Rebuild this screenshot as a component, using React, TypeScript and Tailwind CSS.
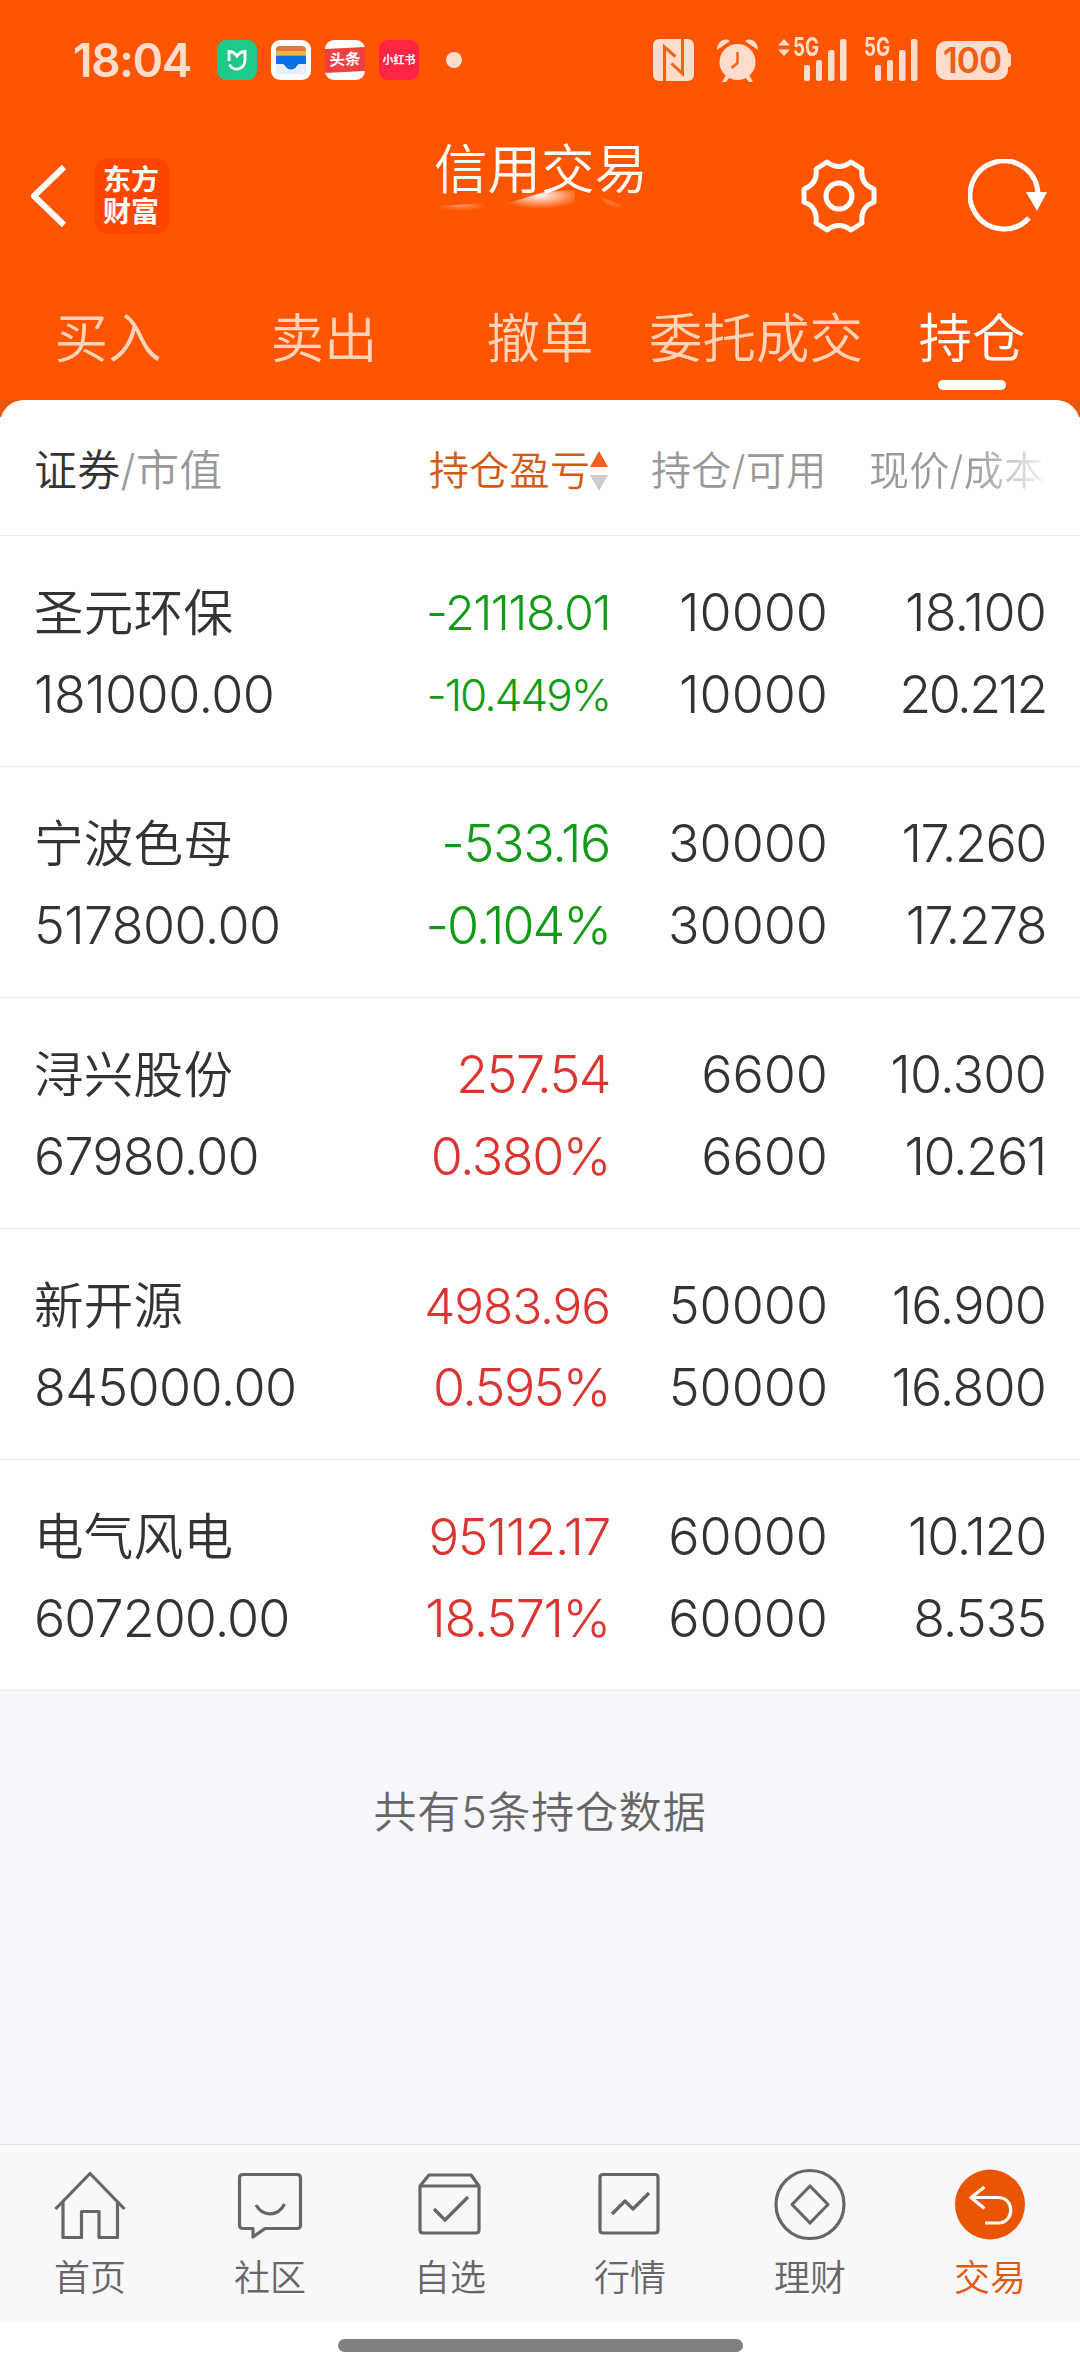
import { ReactNode } from 'react'

interface Position {
    name: string
    value: string
    profit: string
    rate: string
    held: string
    usable: string
    price: string
    cost: string
    down?: boolean
    profitClass?: string
    rateClass?: string
}

const positions: Position[] = [
    { name: '圣元环保', value: '181000.00', profit: '-21118.01', rate: '-10.449%', held: '10000', usable: '10000', price: '18.100', cost: '20.212', down: true, profitClass: 'text-[48.5px]', rateClass: 'text-[44px]' },
    { name: '宁波色母', value: '517800.00', profit: '-533.16', rate: '-0.104%', held: '30000', usable: '30000', price: '17.260', cost: '17.278', down: true },
    { name: '浔兴股份', value: '67980.00', profit: '257.54', rate: '0.380%', held: '6600', usable: '6600', price: '10.300', cost: '10.261' },
    { name: '新开源', value: '845000.00', profit: '4983.96', rate: '0.595%', held: '50000', usable: '50000', price: '16.900', cost: '16.800', profitClass: 'text-[49.5px]' },
    { name: '电气风电', value: '607200.00', profit: '95112.17', rate: '18.571%', held: '60000', usable: '60000', price: '10.120', cost: '8.535', profitClass: 'text-[51px]' },
]

const tabs = ['买入', '卖出', '撤单', '委托成交', '持仓']

// px to take back for the glyphs that Inter sets wide
const glyphTrim: Record<string, number> = { '.': 4.5, '-': 5, '%': 4, '2': 3.5, '4': 0.5, '7': 0.5, '8': 0.5, '9': 1 }

function Num({ children, className = '' }: { children: string; className?: string }) {
    const trim = children.split('').reduce((sum, c) => sum + (glyphTrim[c] ?? 0), 0)

    return (
        <span className={className} style={{ letterSpacing: `${(-trim / children.length).toFixed(2)}px` }}>
            {children}
        </span>
    )
}

function Signal() {
    return (
        <svg width="43" height="42" viewBox="0 0 43 42" fill="currentColor">
            <rect x="0" y="26" width="6" height="16" rx="2" />
            <rect x="12" y="21" width="6" height="21" rx="2" />
            <rect x="24" y="11" width="6.5" height="31" rx="2" />
            <rect x="36" y="0" width="6.5" height="42" rx="2" />
        </svg>
    )
}

function StatusBar() {
    return (
        <div className="flex h-[120px] items-center pl-[73px] text-[#ffdccb]">
            <span className="w-[117px] text-[46px] font-semibold leading-none tracking-[-1.3px]">18:04</span>
            <div className="ml-[27px] flex gap-[14px]">
                <svg width="40" height="40" viewBox="0 0 40 40">
                    <rect width="40" height="40" rx="9" fill="#1fc98b" />
                    <path d="M12 21V11.500q5 0 8 4.500q3-4.500 8-4.500V20" fill="none" stroke="#fff" strokeWidth="2.800" />
                    <path d="M12.500 24.500c3 7 15.500 6.500 15.500-5.500" fill="none" stroke="#fff" strokeWidth="2.800" />
                </svg>
                <svg width="40" height="40" viewBox="0 0 40 40">
                    <rect width="40" height="40" rx="9" fill="#fbfafa" />
                    <path d="M5 12V10q0-4 4-4h22q4 0 4 4v2z" fill="#e4763a" />
                    <rect x="5" y="11" width="30" height="4.500" fill="#f5b23c" />
                    <path d="M5 15.500h30V24h-6q-2 0-3 2c-3 5-9 5-12 0q-1-2-3-2H5z" fill="#0a70e8" />
                    <path d="M5 24h6q2 0 3 2c3 5 9 5 12 0q1-2 3-2h6v7q0 3-3 3H8q-3 0-3-3z" fill="#e6effc" />
                </svg>
                <div className="flex h-10 w-10 items-center overflow-hidden rounded-[9px] bg-white">
                    <div className="flex h-[24px] w-10 -skew-y-3 items-center justify-center bg-[#f04142] text-[15.5px] font-bold leading-none text-white">头条</div>
                </div>
                <div className="flex h-10 w-10 items-center justify-center rounded-[9px] bg-[#ff2543] text-[11px] font-bold leading-none text-white">小红书</div>
            </div>
            <span className="ml-[27px] h-4 w-4 rounded-full bg-[#ffdccb]" />
            <svg className="ml-[191px]" width="41" height="42" viewBox="0 0 41 42">
                <rect width="41" height="42" rx="6" fill="#ffdccb" />
                <path d="M11.500 42V8l11 9.500M29.500 0v34.500l-11-10" fill="none" stroke="#f2611a" strokeWidth="3" />
            </svg>
            <svg className="ml-[23px]" width="41" height="43" viewBox="0 0 41 43">
                <path d="M0 11C0 3 7 -2 13 2zM41 11C41 3 34 -2 28 2zM9 36l-4 7h4l4-5zM32 36l4 7h-4l-4-5z" fill="#ffdccb" />
                <circle cx="20.500" cy="23" r="18" fill="#ffdccb" />
                <path d="M20.500 13v11l-6 5" fill="none" stroke="#f2611a" strokeWidth="2.500" />
            </svg>
            <div className="relative ml-[46px]">
                <svg className="absolute -left-[26px] top-0" width="12" height="17" viewBox="0 0 12 17" fill="currentColor">
                    <path d="M6 0l6 6.500H0zM6 17l6-6.500H0z" />
                </svg>
                <span className="absolute -left-[11px] -top-px origin-left scale-x-75 text-[25px] font-bold leading-[18px]">5G</span>
                <Signal />
            </div>
            <div className="relative ml-[28px]">
                <span className="absolute -left-[11px] -top-px origin-left scale-x-75 text-[25px] font-bold leading-[18px]">5G</span>
                <Signal />
            </div>
            <div className="ml-[18px] flex items-center">
                <div className="flex h-[39px] w-[72px] items-center justify-center rounded-[10px] bg-[#ffdccb] text-[35px] font-semibold leading-none tracking-[-1px] text-[#ee5e18]">100</div>
                <div className="h-[14px] w-[3px] rounded-r bg-[#ffdccb]" />
            </div>
        </div>
    )
}

function TitleBar() {
    return (
        <div className="flex h-[150px] items-start text-white">
            <svg className="ml-[30px] mt-[44px]" width="38" height="64" viewBox="0 0 38 64" fill="none" stroke="currentColor" strokeWidth="6">
                <path d="M34 3L4 32l30 29" strokeLinejoin="round" />
            </svg>
            <div className="ml-[26px] mt-[38px] h-[76px] w-[76px] rounded-[14px] bg-[#ff4600] px-[9px] pt-[6px] text-[28px] font-bold leading-[32px] break-all">
                东方财富
            </div>
            <div className="relative ml-[263px] mt-[22px] w-[216px] whitespace-nowrap text-center text-[53.5px] font-[350] leading-[56px]">
                信用交易
                <svg className="absolute left-[6px] top-[45px]" width="200" height="26" viewBox="0 0 200 26">
                    <defs>
                        <radialGradient id="glow" cx="0.5" cy="0.25" r="0.6">
                            <stop offset="0" stopColor="#fff" stopOpacity=".95" />
                            <stop offset="1" stopColor="#fff" stopOpacity="0" />
                        </radialGradient>
                    </defs>
                    <path d="M66 17L105 5 136 3v22H66z" fill="url(#glow)" />
                    <path d="M0 19L44 16v9H0z" fill="url(#glow)" opacity=".4" />
                    <path d="M160 9l36 15q-26 0-36-15z" fill="url(#glow)" opacity=".35" />
                </svg>
            </div>
            <svg className="ml-[152px] mt-[39px]" width="76" height="74" viewBox="0 0 76 74" fill="none" stroke="currentColor" strokeWidth="5">
                <path d="M26 3Q38 12 50 3L61 10Q59 25 73 30V43Q59 48 61 64L50 71Q38 62 26 71L15 64Q17 48 3 43V30Q17 25 15 10Z" strokeLinejoin="round" />
                <circle cx="38" cy="37" r="13" />
            </svg>
            <svg className="ml-[91px] mt-[39px]" width="80" height="74" viewBox="0 0 80 74" fill="none" stroke="currentColor" strokeWidth="5">
                <path d="M61 59A34 34 0 1 1 70 36" />
                <path d="M58 33h21L69 52z" fill="currentColor" stroke="none" />
            </svg>
        </div>
    )
}

function Pair({ top, bottom, className = '' }: { top: ReactNode; bottom: ReactNode; className?: string }) {
    return (
        <div className={`flex flex-col whitespace-nowrap text-[52px] leading-[82px] ${className}`}>
            {top}
            {bottom}
        </div>
    )
}

function PositionRow({ item }: { item: Position }) {
    return (
        <div className="flex h-[231px] border-b border-[#ececec] pl-[34px] pt-[36px] font-light text-[#333]">
            <Pair
                className="w-[280px]"
                top={<span className="text-[49.5px] font-[350] tracking-[0.3px]">{item.name}</span>}
                bottom={<Num>{item.value}</Num>}
            />
            <Pair
                className={`w-[296px] text-right ${item.down ? 'text-[#109b16]' : 'text-[#dc3531]'}`}
                top={<Num className={item.profitClass}>{item.profit}</Num>}
                bottom={<Num className={item.rateClass}>{item.rate}</Num>}
            />
            <Pair className="w-[218px] text-right" top={<Num>{item.held}</Num>} bottom={<Num>{item.usable}</Num>} />
            <Pair className="w-[218px] text-right" top={<Num>{item.price}</Num>} bottom={<Num>{item.cost}</Num>} />
        </div>
    )
}

const navItems = [
    {
        label: '首页',
        icon: <path d="M1.500 41L36 5.500 70.500 41M9 34v35.500h18.500V43.500H45v26h18.500V34" />,
    },
    {
        label: '社区',
        icon: <path d="M9 6.500h54q3.500 0 3.500 3.500v47q0 3.500-3.500 3.500H31L19 69v-8.500H9q-3.500 0-3.500-3.500V10q0-3.500 3.500-3.500zM22 37c7 12 22 12 28.500-1" />,
    },
    {
        label: '自选',
        icon: <path d="M6 18v44q0 3 3 3h53q3 0 3-3V18L57 7H15L6 18h59M20 41l11 11 23-23" />,
    },
    {
        label: '行情',
        icon: <path d="M9 6.500h52q3 0 3 3V62q0 3-3 3H9q-3 0-3-3V9.500q0-3 3-3zM18 46l13-13 8 8 16-16" />,
    },
    {
        label: '理财',
        icon: (
            <>
                <circle cx="36" cy="36.500" r="34" />
                <path d="M36 18l18 18.500L36 55 18 36.500z" />
            </>
        ),
    },
    {
        label: '交易',
        active: true,
        icon: (
            <>
                <circle cx="36" cy="36.500" r="35" fill="#ea5504" stroke="none" />
                <path d="M30.500 19L17 29.500l13.500 11M17 29.500h27c17 0 17 25.500 0 25.500H31" stroke="#fff" />
            </>
        ),
    },
]

export default function App() {
    return (
        <div className="flex h-[2376px] w-[1080px] flex-col overflow-hidden bg-white font-[Inter,'Noto_Sans_CJK_SC',sans-serif]">
            <header className="h-[400px] shrink-0 bg-[#ff5500]">
                <StatusBar />
                <TitleBar />
                <nav className="flex h-[130px] items-start pt-[29px]">
                    {tabs.map(tab => (
                        <div
                            key={tab}
                            className={`flex w-[216px] flex-col items-center whitespace-nowrap text-[53.5px] font-[350] leading-[80px] ${tab === '持仓' ? 'text-white' : 'text-[#ffd3b8]'}`}
                        >
                            {tab}
                            {tab === '持仓' && <span className="mt-px h-[10px] w-[68px] rounded-full bg-white" />}
                        </div>
                    ))}
                </nav>
            </header>

            <main className="bg-[linear-gradient(#e9570a_17px,#fff_17px)]">
                <div className="flex h-[136px] items-center rounded-t-[24px] border-b border-[#ececec] bg-white pl-[34px] pt-[6px] text-[40px] font-[350] tracking-[0.3px] text-[#999]">
                    <div className="w-[395px] text-[43px]">
                        <span className="text-[#333]">证券</span>/市值
                    </div>
                    <div className="flex w-[222px] items-center text-[#d35a15]">
                        持仓盈亏
                        <svg width="18" height="40" viewBox="0 0 18 40">
                            <path d="M9 0l9 16H0z" fill="#f2611a" />
                            <path d="M9 40l9-16H0z" fill="#ccc" />
                        </svg>
                    </div>
                    <div className="w-[218px]">持仓/可用</div>
                    <div className="bg-linear-to-r from-[#999] from-60% to-[#f6f6f6] bg-clip-text text-transparent">现价/成本</div>
                </div>
                {positions.map(item => (
                    <PositionRow key={item.name} item={item} />
                ))}
            </main>

            <section className="flex-1 bg-[#f6f7fa] pt-[90px] text-center text-[43px] font-[350] leading-[62px] tracking-[0.8px] text-[#666]">
                共有5条持仓数据
            </section>

            <footer className="flex h-[178px] shrink-0 border-t border-[#dfe3e5] bg-[#f8f8fb]">
                {navItems.map(item => (
                    <div
                        key={item.label}
                        className={`flex flex-1 flex-col items-center pt-[23px] text-[36px] font-[350] leading-[50px] ${item.active ? 'text-[#e0590f]' : 'text-[#666]'}`}
                    >
                        <svg width="72" height="73" viewBox="0 0 72 73" fill="none" stroke="currentColor" strokeWidth="3.200" strokeLinejoin="round" className="mb-[12px]">
                            {item.icon}
                        </svg>
                        {item.label}
                    </div>
                ))}
            </footer>
            <div className="flex h-[54px] shrink-0 justify-center bg-white pt-[17px]">
                <div className="h-[13px] w-[405px] rounded-full bg-[#808080]" />
            </div>
        </div>
    )
}
